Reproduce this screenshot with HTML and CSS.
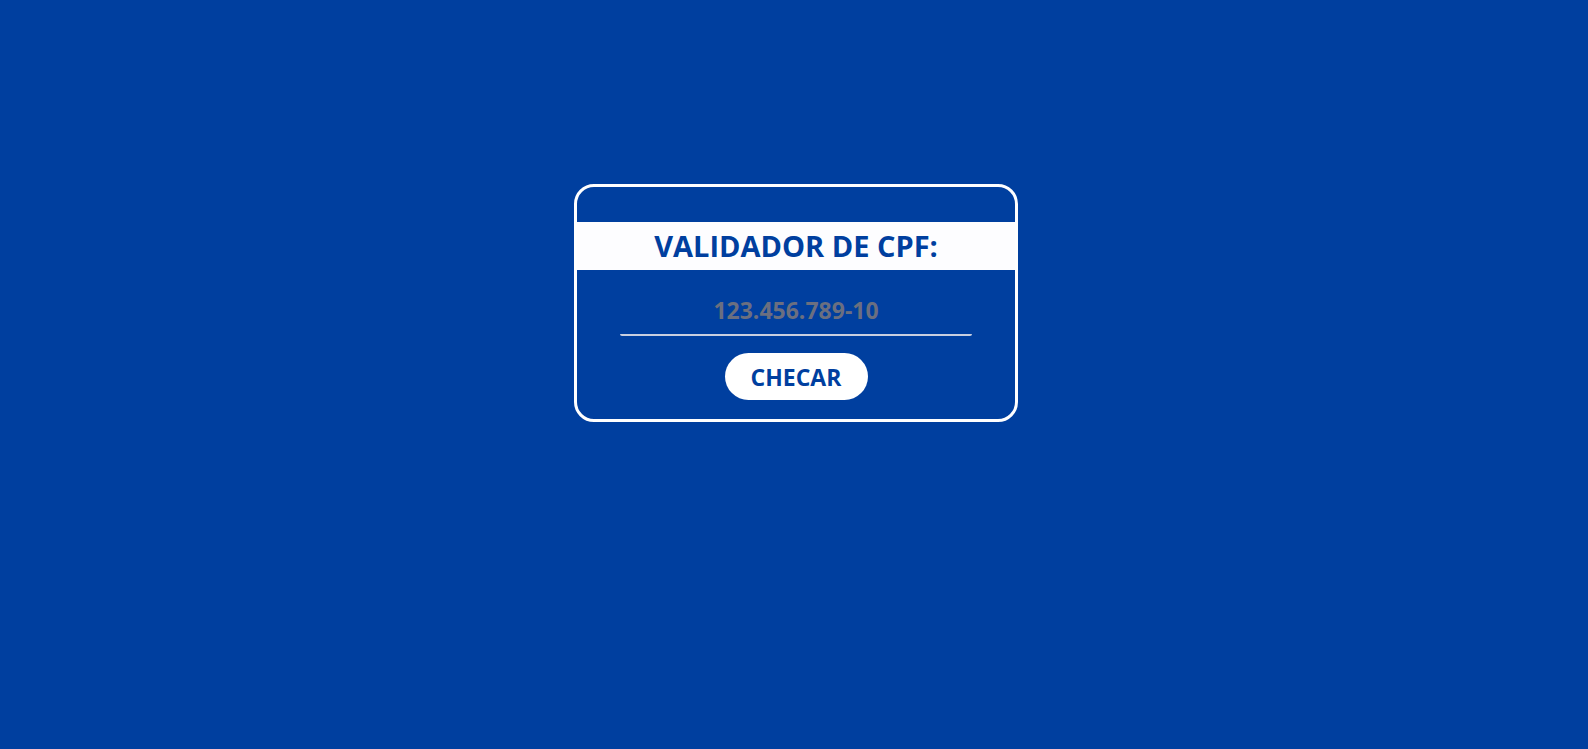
FILE: index.html
```html
<!DOCTYPE html>
<html lang="pt-BR">
<head>
<meta charset="utf-8">
<title>Validador de CPF</title>
<link rel="stylesheet" href="styles.css">
</head>
<body>
<main class="page">
  <section class="card">
    <h1 class="title">VALIDADOR DE CPF:</h1>
    <input class="cpf-input" type="text" placeholder="123.456.789-10">
    <button class="check-btn" type="button">CHECAR</button>
  </section>
</main>
</body>
</html>
```

FILE: styles.css
```css
* { box-sizing: border-box; }

html, body {
  margin: 0;
  padding: 0;
}

body {
  background: #003f9f;
  font-family: "Open Sans", "Noto Sans", sans-serif;
  min-height: 100vh;
}

.page {
  display: flex;
  justify-content: center;
  padding-top: 184px;
  padding-left: 4px;
}

.card {
  width: 444px;
  border: 3px solid #ffffff;
  border-radius: 20px;
  padding: 35px 0 19px;
  display: flex;
  flex-direction: column;
  align-items: center;
}

.title {
  width: 100%;
  margin: 0;
  height: 48px;
  line-height: 48px;
  background: #fdfdff;
  color: #003f9f;
  font-size: 29px;
  font-weight: 700;
  text-align: center;
}

.cpf-input {
  margin-top: 16px;
  width: 352px;
  height: 50px;
  padding: 8px 0 8px;
  border: none;
  border-bottom: 2px solid #c8cfe0;
  border-radius: 2px;
  background: transparent;
  color: #ffffff;
  font-family: inherit;
  font-size: 23px;
  font-weight: 700;
  text-align: center;
  outline: none;
}

.cpf-input::placeholder {
  color: #6b6f80;
  opacity: 1;
}

.check-btn {
  margin-top: 17px;
  width: 143px;
  height: 47px;
  padding: 0;
  border: none;
  border-radius: 24px;
  background: #ffffff;
  color: #003f9f;
  font-family: inherit;
  font-size: 23px;
  font-weight: 700;
  cursor: pointer;
}
```
